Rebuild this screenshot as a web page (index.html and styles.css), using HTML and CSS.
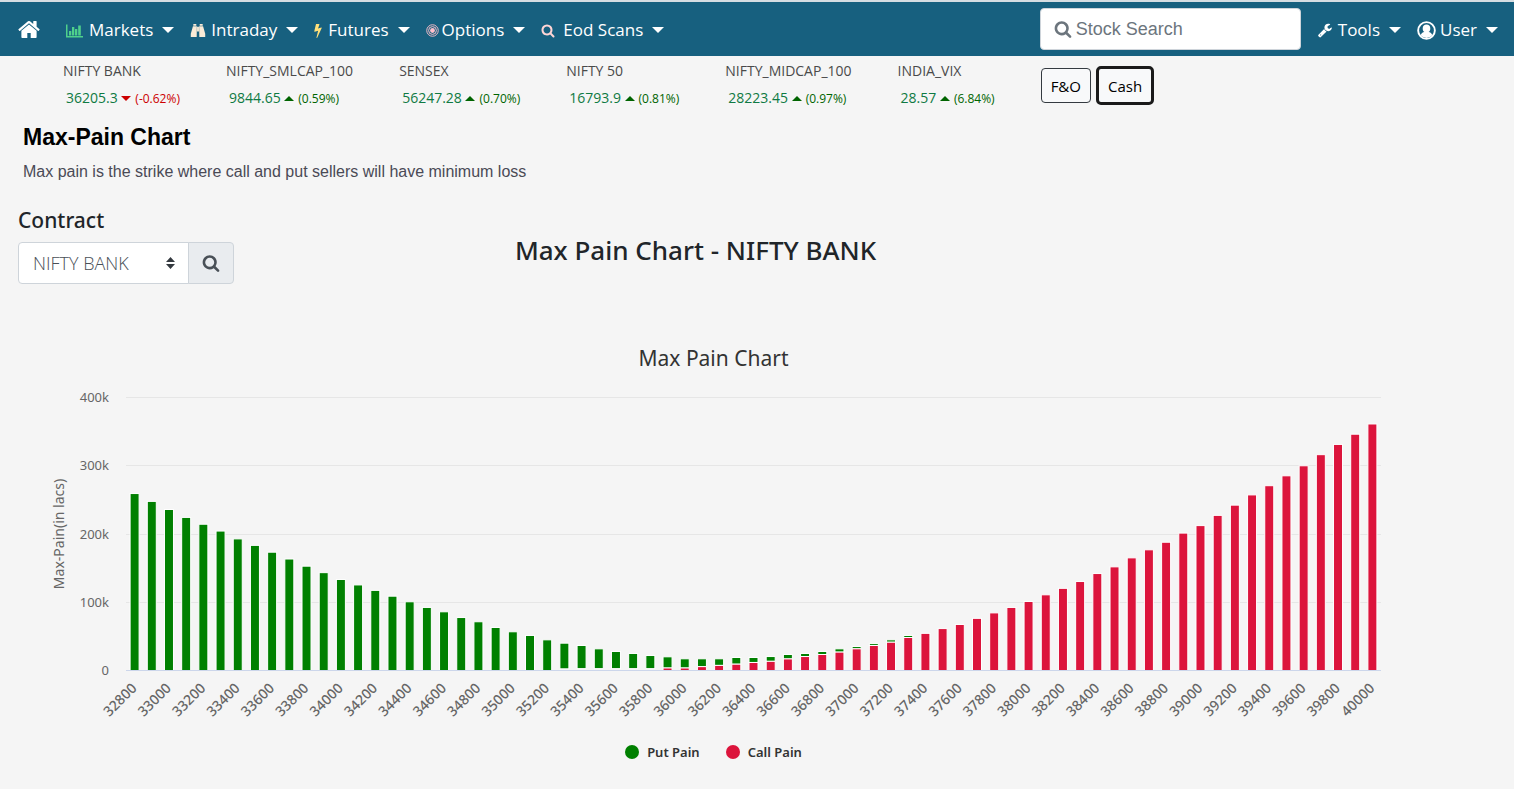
FILE: index.html
```html
<!DOCTYPE html>
<html lang="en">
<head>
<meta charset="utf-8">
<title>Max-Pain Chart - NIFTY BANK</title>
<meta name="viewport" content="width=device-width, initial-scale=1">
<link rel="stylesheet" href="styles.css">
</head>
<body>
<svg class="sprite" aria-hidden="true">
  <symbol id="i-search" viewBox="0 0 1792 1792"><path d="M1216 832q0-185-131.500-316.500t-316.500-131.500-316.500 131.500-131.500 316.500 131.500 316.500 316.500 131.500 316.500-131.500 131.500-316.500zm512 832q0 52-38 90t-90 38q-54 0-90-38l-343-342q-179 124-399 124-143 0-273.500-55.500t-225-150-150-225-55.500-273.500 55.500-273.500 150-225 225-150 273.500-55.500 273.500 55.500 225 150 150 225 55.500 273.500q0 220-124 399l343 343q37 37 37 90z"/></symbol>
</svg>
<header class="navbar">
  <a class="home" href="#" aria-label="Home"><svg class="icon-home" viewBox="64 192 1664 1408"><path d="M1472 992v480q0 26-19 45t-45 19h-384v-384h-256v384h-384q-26 0-45-19t-19-45v-480q0-1 .5-3t.5-3l575-474 575 474q1 2 1 6zm223-69l-62 74q-8 9-21 11h-3q-13 0-21-7l-692-577-692 577q-12 8-24 7-13-2-21-11l-62-74q-8-10-7-23.500t11-21.500l719-599q32-26 76-26t76 26l244 204v-195q0-14 9-23t23-9h192q14 0 23 9t9 23v408l219 182q10 8 11 21.500t-7 23.500z"/></svg></a>
  <nav class="menu" aria-label="Main">
    <button type="button" class="menu-item"><svg class="icon icon-markets" viewBox="0 0 17 14"><path d="M0 1h1.500v11.500H17V14H0zM3 7.500h2.300V12H3zM6 3.500h2.300V12H6zM9 5.500h2.300V12H9zM12.200 2h2.600v10h-2.600z"/></svg>Markets<span class="caret"></span></button>
    <button type="button" class="menu-item"><svg class="icon icon-intraday" viewBox="0 0 16 16"><path d="M3 1h3.200v2H3zM9.800 1H13v2H9.800zM2.600 3.500h4.200L6.600 15H.3v-3.500zM13.400 3.500H9.200L9.400 15h6.300v-3.500zM7 4h2v5H7z"/></svg>Intraday<span class="caret"></span></button>
    <button type="button" class="menu-item"><svg class="icon icon-futures" viewBox="440 0 910 1792"><path d="M1333 566q18 20 7 44l-540 1157q-13 25-42 25-4 0-14-2-17-5-25.500-19t-4.500-30l197-808-406 101q-4 1-12 1-18 0-31-11-18-15-13-39l201-825q4-16 18-26t33-10h328q19 0 32 12.500t13 29.500q0 8-5 18l-171 463 396-98q8-2 12-2 19 0 34 15z"/></svg>Futures<span class="caret"></span></button>
    <button type="button" class="menu-item"><svg class="icon icon-options" viewBox="0 0 14 14"><circle cx="7" cy="7" r="6.200"/><circle cx="7" cy="7" r="4.200"/><circle class="bull" cx="7" cy="7" r="2.600"/></svg>Options<span class="caret"></span></button>
    <button type="button" class="menu-item"><svg class="icon icon-eod"><use href="#i-search"/></svg>Eod Scans<span class="caret"></span></button>
  </nav>
  <label class="stock-search"><svg class="icon-search"><use href="#i-search"/></svg><input type="search" placeholder="Stock Search" aria-label="Stock Search"></label>
  <nav class="menu" aria-label="Account">
    <button type="button" class="menu-item"><svg class="icon icon-tools" viewBox="64 100 1680 1680"><path d="M448 1472q0-26-19-45t-45-19-45 19-19 45 19 45 45 19 45-19 19-45zm644-420l-682 682q-37 37-90 37-52 0-91-37l-106-108q-38-36-38-90 0-53 38-91l681-681q39 98 114.500 173.500t173.500 114.500zm634-435q0 39-23 106-47 134-164.500 217.500t-258.500 83.500q-185 0-316.500-131.500t-131.500-316.500 131.500-316.500 316.500-131.500q58 0 121.500 16.500t107.500 46.500q16 11 16 28t-16 28l-293 169v224l193 107q5-3 79-48.500t135.500-81 70.500-35.500q15 0 23.500 10t8.500 25z"/></svg>Tools<span class="caret"></span></button>
    <button type="button" class="menu-item"><svg class="icon icon-user" viewBox="0 0 20 20"><circle class="ring" cx="10" cy="10" r="8.800"/><path d="M10 3.600a4 4 0 0 1 4 4.200c0 1.700-.7 3.100-1.800 3.900 2 .3 3.300 1.400 3.900 3.300A8 8 0 0 1 10 18a8 8 0 0 1-6.100-3c.6-1.900 1.900-3 3.900-3.300C6.700 10.900 6 9.500 6 7.800a4 4 0 0 1 4-4.200z"/></svg>User<span class="caret"></span></button>
  </nav>
</header>

<section class="ticker" aria-label="Indices">
  <div class="quote"><div class="name">NIFTY BANK</div><div class="price">36205.3 <span class="change down"><i></i>(-0.62%)</span></div></div>
  <div class="quote"><div class="name">NIFTY_SMLCAP_100</div><div class="price">9844.65 <span class="change up"><i></i>(0.59%)</span></div></div>
  <div class="quote"><div class="name">SENSEX</div><div class="price">56247.28 <span class="change up"><i></i>(0.70%)</span></div></div>
  <div class="quote"><div class="name">NIFTY 50</div><div class="price">16793.9 <span class="change up"><i></i>(0.81%)</span></div></div>
  <div class="quote"><div class="name">NIFTY_MIDCAP_100</div><div class="price">28223.45 <span class="change up"><i></i>(0.97%)</span></div></div>
  <div class="quote"><div class="name">INDIA_VIX</div><div class="price">28.57 <span class="change up"><i></i>(6.84%)</span></div></div>
  <div class="segments"><button type="button" class="segment">F&amp;O</button><button type="button" class="segment active">Cash</button></div>
</section>

<main>
  <div class="intro">
    <h1>Max-Pain Chart</h1>
    <p>Max pain is the strike where call and put sellers will have minimum loss</p>
  </div>
  <div class="controls">
    <form class="contract">
      <label for="contract">Contract</label>
      <div class="input-group">
        <div class="select-wrap">
          <select id="contract"><option>NIFTY BANK</option><option>NIFTY 50</option></select>
          <svg class="sort" viewBox="0 0 9 12" aria-hidden="true"><path d="M0 5 4.500 0 9 5zM0 7h9L4.500 12z"/></svg>
        </div>
        <button type="submit" aria-label="Search"><svg class="icon-search"><use href="#i-search"/></svg></button>
      </div>
    </form>
    <h2>Max Pain Chart - NIFTY BANK</h2>
  </div>
  <figure class="chart">
    <figcaption>Max Pain Chart</figcaption>
    <svg id="plot" class="plot" viewBox="0 0 1514 368" role="img" aria-label="Put and call pain by strike"></svg>
    <ul class="legend">
      <li><span class="dot put"></span>Put Pain</li>
      <li><span class="dot call"></span>Call Pain</li>
    </ul>
  </figure>
</main>
<script src="chart.js"></script>
</body>
</html>
```
FILE: styles.css
```css
* { box-sizing: border-box; }
body {
  margin: 0;
  background: #f5f5f5;
  color: #212529;
  font-family: "Noto Sans", "Open Sans", sans-serif;
  font-size: 16px;
}
button, input, select { font: inherit; }
.sprite { position: absolute; width: 0; height: 0; }

.navbar {
  display: flex;
  align-items: center;
  height: 56px;
  padding: 0 16px 0 18px;
  border-top: 2px solid #d5dde2;
  background: #17607f;
  color: #fff;
}
.home { display: flex; margin-right: 26px; }
.icon-home { width: 22px; height: 19px; fill: #fff; }
.menu { display: flex; align-items: center; gap: 16px; padding-top: 2px; }
.menu-item {
  display: flex;
  align-items: center;
  padding: 0;
  border: 0;
  background: none;
  color: #fff;
  font-family: "Open Sans", sans-serif;
  font-size: 17px;
  line-height: 26px;
  white-space: nowrap;
}
.caret {
  margin-left: 9px;
  border: 6px solid transparent;
  border-top-color: #fff;
  border-bottom: 0;
}
.icon { flex: none; height: 15px; margin-right: 6px; }
.icon-markets { width: 17px; fill: #4fd08b; }
.icon-intraday { width: 16px; margin-right: 5px; fill: #faebd7; }
.icon-futures { width: 8px; fill: #ffe07a; }
.icon-options { width: 13px; margin-right: 3px; fill: none; stroke: #ffc0cb; }
.icon-options .bull { fill: #ffc0cb; stroke: none; }
.icon-eod { width: 14px; margin-right: 8px; fill: #ffd5d5; }
.icon-tools { width: 14px; fill: #fff; }
.icon-user { width: 19px; height: 19px; margin-right: 4px; fill: #fff; }
.icon-user .ring { fill: none; stroke: #fff; stroke-width: 2; }
.icon-search { width: 18px; height: 18px; fill: #495057; }

.stock-search {
  display: flex;
  align-items: center;
  gap: 4px;
  width: 261px;
  height: 42px;
  margin-left: auto;
  margin-right: 17px;
  padding: 0 13px;
  border: 1px solid #ced4da;
  border-radius: 4px;
  background: #fff;
}
.stock-search .icon-search { flex: none; fill: #6c757d; }
.stock-search input {
  flex: 1;
  min-width: 0;
  padding: 0;
  border: 0;
  outline: 0;
  background: none;
  font-family: "Liberation Sans", sans-serif;
  font-size: 18px;
}
.stock-search input::placeholder { color: #6c757d; opacity: 1; }

.ticker {
  display: flex;
  align-items: center;
  gap: 46px;
  height: 59px;
  padding-left: 63px;
  font-family: "Open Sans", sans-serif;
  white-space: nowrap;
}
.quote { padding-bottom: 3px; }
.name { color: #4a4a4a; font-size: 14px; line-height: 27px; }
.price { padding-left: 3px; color: #0f7a43; font-size: 14px; line-height: 27px; }
.change { font-size: 12px; }
.change i {
  display: inline-block;
  margin-right: 4px;
  border: 5px solid transparent;
  vertical-align: 2px;
}
.up { color: #006400; }
.down { color: #c00; }
.up i { border-top: 0; border-bottom-color: #006400; }
.down i { border-bottom: 0; border-top-color: #c00; }
.segments { display: flex; align-items: center; gap: 5px; }
.segment {
  height: 35px;
  padding: 0 9px;
  border: 1px solid #343a40;
  border-radius: 4px;
  background: #f8f9fa;
  color: #000;
  font-size: 15px;
}
.segment.active { height: 39px; border: 3px solid #1a1a1a; border-radius: 5px; }

.intro { padding: 8px 23px 0; font-family: "Liberation Sans", sans-serif; }
h1 { margin: 0; color: #000; font-size: 23px; line-height: 28px; }
.intro p { margin: 10px 0 0; color: #4a4a55; font-size: 16px; line-height: 22px; }

.controls {
  display: grid;
  grid-template-columns: 216px 1fr 339px;
  align-items: center;
  padding: 22px 18px 0;
}
.contract label { display: block; margin-bottom: 7px; font-size: 21px; font-weight: 500; line-height: 30px; }
.input-group { display: flex; height: 42px; }
.select-wrap { display: grid; flex: 1; align-items: center; }
.select-wrap > * { grid-area: 1 / 1; }
select {
  width: 100%;
  height: 42px;
  padding: 0 14px;
  appearance: none;
  border: 1px solid #ced4da;
  border-radius: 4px 0 0 4px;
  background: #fff;
  color: #495057;
  font-family: "Open Sans", sans-serif;
  font-size: 18px;
  font-weight: 300;
}
.sort { justify-self: end; width: 9px; height: 12px; margin-right: 14px; fill: #343a40; pointer-events: none; }
.input-group button {
  display: grid;
  place-items: center;
  width: 46px;
  margin-left: -1px;
  border: 1px solid #ced4da;
  border-radius: 0 4px 4px 0;
  background: #e9ecef;
}
h2 { margin: 0; padding-top: 10px; font-size: 26px; font-weight: 500; line-height: 36px; text-align: center; }

.chart { margin: 58px 0 0; }
figcaption { padding-right: 87px; color: #333; font-size: 21px; line-height: 32px; text-align: center; }
.plot { display: block; width: 100%; height: auto; }
.grid-line { stroke: #e6e6e6; }
.axis-line { stroke: #ccd6eb; }
.axis-text { fill: #666; font-size: 13px; }
.axis-title { fill: #666; font-size: 14px; }
.strike { fill: #666; font-size: 14px; font-weight: 500; }
.bar { stroke: #fff; stroke-width: 1; }
.bar-put { fill: #008000; }
.bar-call { fill: #dc143c; }
.legend {
  display: flex;
  justify-content: center;
  gap: 26px;
  margin: 0;
  padding: 0 87px 0 0;
  color: #333;
  font-size: 13px;
  font-weight: 600;
  line-height: 20px;
  list-style: none;
}
.legend li { display: flex; align-items: center; gap: 8px; }
.dot { width: 14px; height: 14px; border-radius: 50%; }
.dot.put { background: #008000; }
.dot.call { background: #dc143c; }
```
FILE: chart.js
```js
// Pain per strike in thousands of lacs; strikes run from 32800 in steps of 100.
const total = [
  258, 246.5, 234.6, 223, 213, 203, 191.5, 182, 172, 162, 151.5, 142, 132, 124, 116, 107.5, 99.3, 91,
  84.6, 76.2, 70, 61.6, 55.3, 49.9, 43.5, 38.6, 35.2, 30.3, 26.4, 23.5, 20.5, 18.6, 15.7, 15.7, 15.7,
  17.6, 17.6, 19, 22, 23.5, 26.4, 30.3, 33.7, 38, 43.5, 49.9, 53, 60, 66, 75, 83, 91, 99.7, 109.5,
  119, 129, 140.7, 150.5, 163.7, 175.5, 186.6, 200, 211, 226, 241, 256, 269.5, 284, 298.7, 315, 330, 345, 360
];
const callHead = {
  25: 1, 26: 1.3, 27: 1.3, 28: 1.3, 29: 1.3, 30: 1.3, 31: 2.2, 32: 2.2, 33: 4.2, 34: 6, 35: 7.8, 36: 10.3,
  37: 12, 38: 15.5, 39: 19, 40: 22, 41: 25.5, 42: 30.3, 43: 35.2, 44: 40, 45: 46.9
};
const LEFT = 126, RIGHT = 1381, BASE = 296, UNIT = 0.682;
const MIN_VISIBLE = 2;
const plot = document.getElementById("plot");

function draw(tag, attrs, text) {
  const el = document.createElementNS("http://www.w3.org/2000/svg", tag);
  for (const key in attrs) el.setAttribute(key, attrs[key]);
  if (text) el.textContent = text;
  plot.appendChild(el);
}

for (let k = 0; k <= 400; k += 100) {
  const y = Math.round(BASE - k * UNIT) + 0.5;
  if (k) draw("line", { class: "grid-line", x1: LEFT, x2: RIGHT, y1: y, y2: y });
  draw("text", { class: "axis-text", x: 109, y: y + 4, "text-anchor": "end" }, k ? k + "k" : "0");
}
draw("text", { class: "axis-title", transform: "translate(64 160) rotate(-90)", "text-anchor": "middle" }, "Max-Pain(in lacs)");

const step = (RIGHT - LEFT) / total.length;
total.forEach((sum, i) => {
  const center = LEFT + step * (i + 0.5);
  const call = i > 45 ? sum : callHead[i] || 0;
  const top = BASE - sum * UNIT - 0.5;
  const split = BASE - call * UNIT - 0.5;
  const x = center - 4.5;
  if (i <= 45) draw("rect", { class: "bar bar-put", x, y: top, width: 9, height: (call ? split : BASE + 0.5) - top });
  if (call > MIN_VISIBLE) draw("rect", { class: "bar bar-call", x, y: split, width: 9, height: BASE + 0.5 - split });
  if (i % 2 === 0) {
    draw("text", { class: "strike", transform: `translate(${center + 3} 315) rotate(-45)`, "text-anchor": "end" }, String(32800 + i * 100));
  }
});
draw("line", { class: "axis-line", x1: LEFT, x2: RIGHT, y1: BASE + 0.5, y2: BASE + 0.5 });
```
